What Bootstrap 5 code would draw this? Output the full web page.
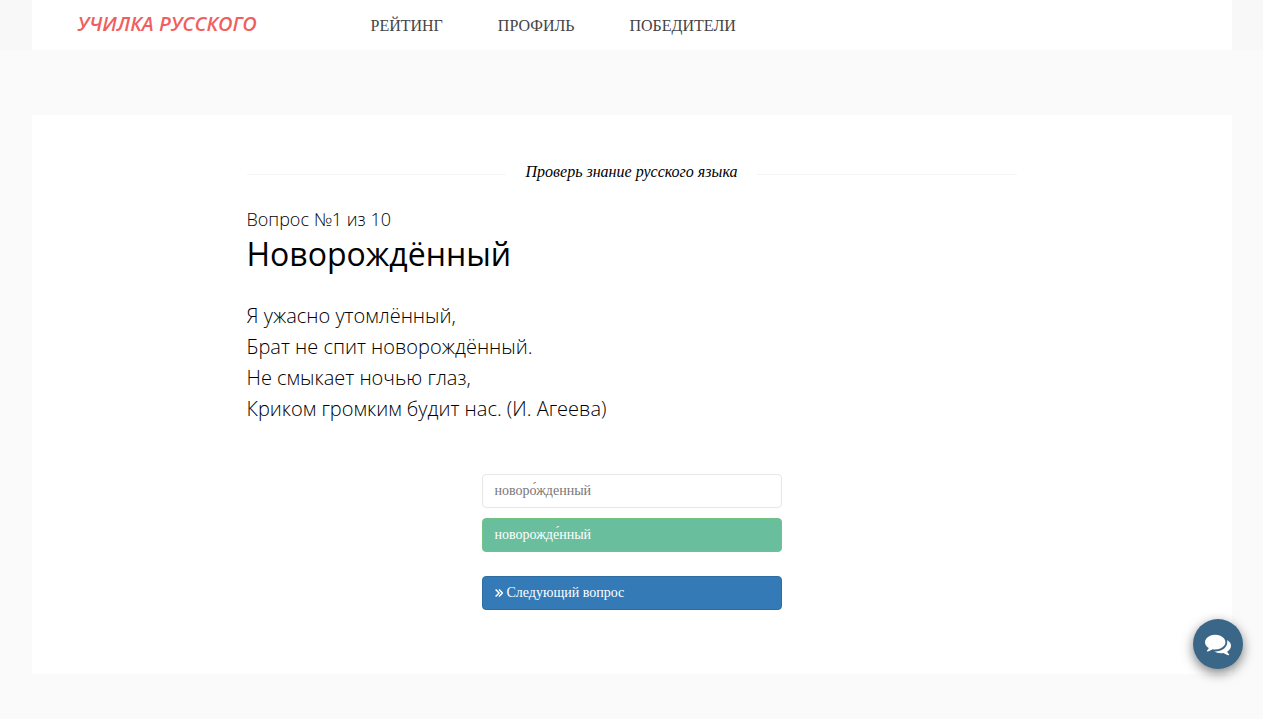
<!DOCTYPE html>
<html lang="ru">
<head>
<meta charset="utf-8">
<meta name="viewport" content="width=device-width, initial-scale=1">
<title>Училка русского</title>
<link href="https://cdn.jsdelivr.net/npm/bootstrap@5.3.0/dist/css/bootstrap.min.css" rel="stylesheet">
<style>
body{background:#fafafa;color:#000;font-family:"Liberation Serif","Times New Roman",serif;font-size:14px}
.page-shell{max-width:1200px}
.site-head{background:#f8f8f8}
.site-nav{min-height:50px;padding:0 46px}
.brand-link{font:italic 600 20px/24px "Open Sans",sans-serif;color:#f05f5f;width:293px;flex:none;padding-bottom:2px}
.menu-link{font-size:16px;line-height:24px;color:#444}
.menu-list{gap:8px 55px;padding-top:2px}
.quiz-panel{margin-top:65px;padding:45px 16px 64px}
.quiz-body{max-width:770px;font-family:"Open Sans",sans-serif;font-weight:300}
.quiz-title{font:italic 400 16px/24px "Liberation Serif",serif;gap:20px}
.rule-line{height:1px;background:#f5f5f5;margin-top:5px}
.step-text{font-size:18px;line-height:26px;margin-top:22px}
.word-title{font-size:32px;line-height:44px;font-weight:400}
.verse-text{font-size:20px;line-height:31px;margin-top:24px}
.answers{max-width:300px;margin-top:50px;gap:10px}
.answer-btn{border-radius:4px;font:14px/20px "Liberation Serif",serif;padding:6px 12px;text-align:left}
.answer-plain,.answer-plain:hover{border:1px solid #e7e7e7;background:#fff;color:#777}
.answer-right,.answer-right:hover{border:1px solid #70c286;background:#69be9d;color:#fff}
.answer-next,.answer-next:hover{border:1px solid #2e6da4;background:#337ab7;color:#fff;margin-top:14px}
.chat-btn{width:50px;height:50px;right:20px;bottom:50px;background:#3a6788;box-shadow:0 4px 12px rgba(0,0,0,.5)}
</style>
</head>
<body>
<header class="site-head">
<nav class="site-nav page-shell mx-auto bg-white d-flex flex-wrap align-items-center">
<a class="brand-link text-decoration-none" href="#">УЧИЛКА РУССКОГО</a>
<ul class="menu-list list-unstyled d-flex flex-wrap mb-0">
<li><a class="menu-link text-decoration-none" href="#">РЕЙТИНГ</a></li>
<li><a class="menu-link text-decoration-none" href="#">ПРОФИЛЬ</a></li>
<li><a class="menu-link text-decoration-none" href="#">ПОБЕДИТЕЛИ</a></li>
</ul>
</nav>
</header>
<main class="quiz-panel page-shell mx-auto bg-white">
<div class="quiz-body mx-auto">
<div class="quiz-title d-flex align-items-center"><span class="rule-line flex-fill"></span>Проверь знание русского языка<span class="rule-line flex-fill"></span></div>
<p class="step-text mb-0">Вопрос №1 из 10</p>
<h1 class="word-title mb-0">Новорождённый</h1>
<p class="verse-text mb-0">Я ужасно утомлённый,<br>Брат не спит новорождённый.<br>Не смыкает ночью глаз,<br>Криком громким будит нас. (И. Агеева)</p>
<div class="answers mx-auto d-grid">
<button type="button" class="btn answer-btn answer-plain">новоро́жденный</button>
<button type="button" class="btn answer-btn answer-right">новорожде́нный</button>
<button type="button" class="btn answer-btn answer-next d-flex align-items-center gap-1"><svg width="8" height="10" viewBox="0 0 8 10" fill="none" stroke="currentColor" stroke-width="1.5" aria-hidden="true"><path d="M.6 1.4 4.1 5 .6 8.6M4 1.4 7.5 5 4 8.6"/></svg>Следующий вопрос</button>
</div>
</div>
</main>
<button type="button" class="chat-btn btn border-0 rounded-circle position-fixed p-0 d-flex align-items-center justify-content-center" aria-label="Чат">
<svg width="26" height="26" viewBox="0 0 1792 1792" fill="#fff" aria-hidden="true"><path d="M1408 768q0 139-94 257t-256.500 186.500-353.500 68.500q-86 0-176-16-124 88-278 128-36 9-86 16h-3q-11 0-20.500-8t-11.500-21q-1-3-1-6.500t.5-6.500 2-6l2.500-5 3.500-5.500 4-5 4.500-5 4-4.500q5-6 23-25t26-29.500 22.500-29 25-38.500 20.500-44q-124-72-195-177t-71-224q0-139 94-257t256.500-186.500 353.500-68.500 353.500 68.500 256.500 186.500 94 257zm384 256q0 120-71 224.500t-195 176.500q10 24 20.500 44t25 38.500 22.500 29 26 29.500 23 25q1 1 4 4.500t4.500 5 4 5 3.500 5.500l2.500 5 2 6 .5 6.500-1 6.500q-3 14-13 22t-22 7q-50-7-86-16-154-40-278-128-90 16-176 16-271 0-472-132 58 4 88 4 161 0 309-45t264-129q125-92 192-212t67-254q0-77-23-152 129 71 204 178t75 230z"/></svg>
</button>
<script src="https://cdn.jsdelivr.net/npm/bootstrap@5.3.0/dist/js/bootstrap.bundle.min.js"></script>
</body>
</html>
